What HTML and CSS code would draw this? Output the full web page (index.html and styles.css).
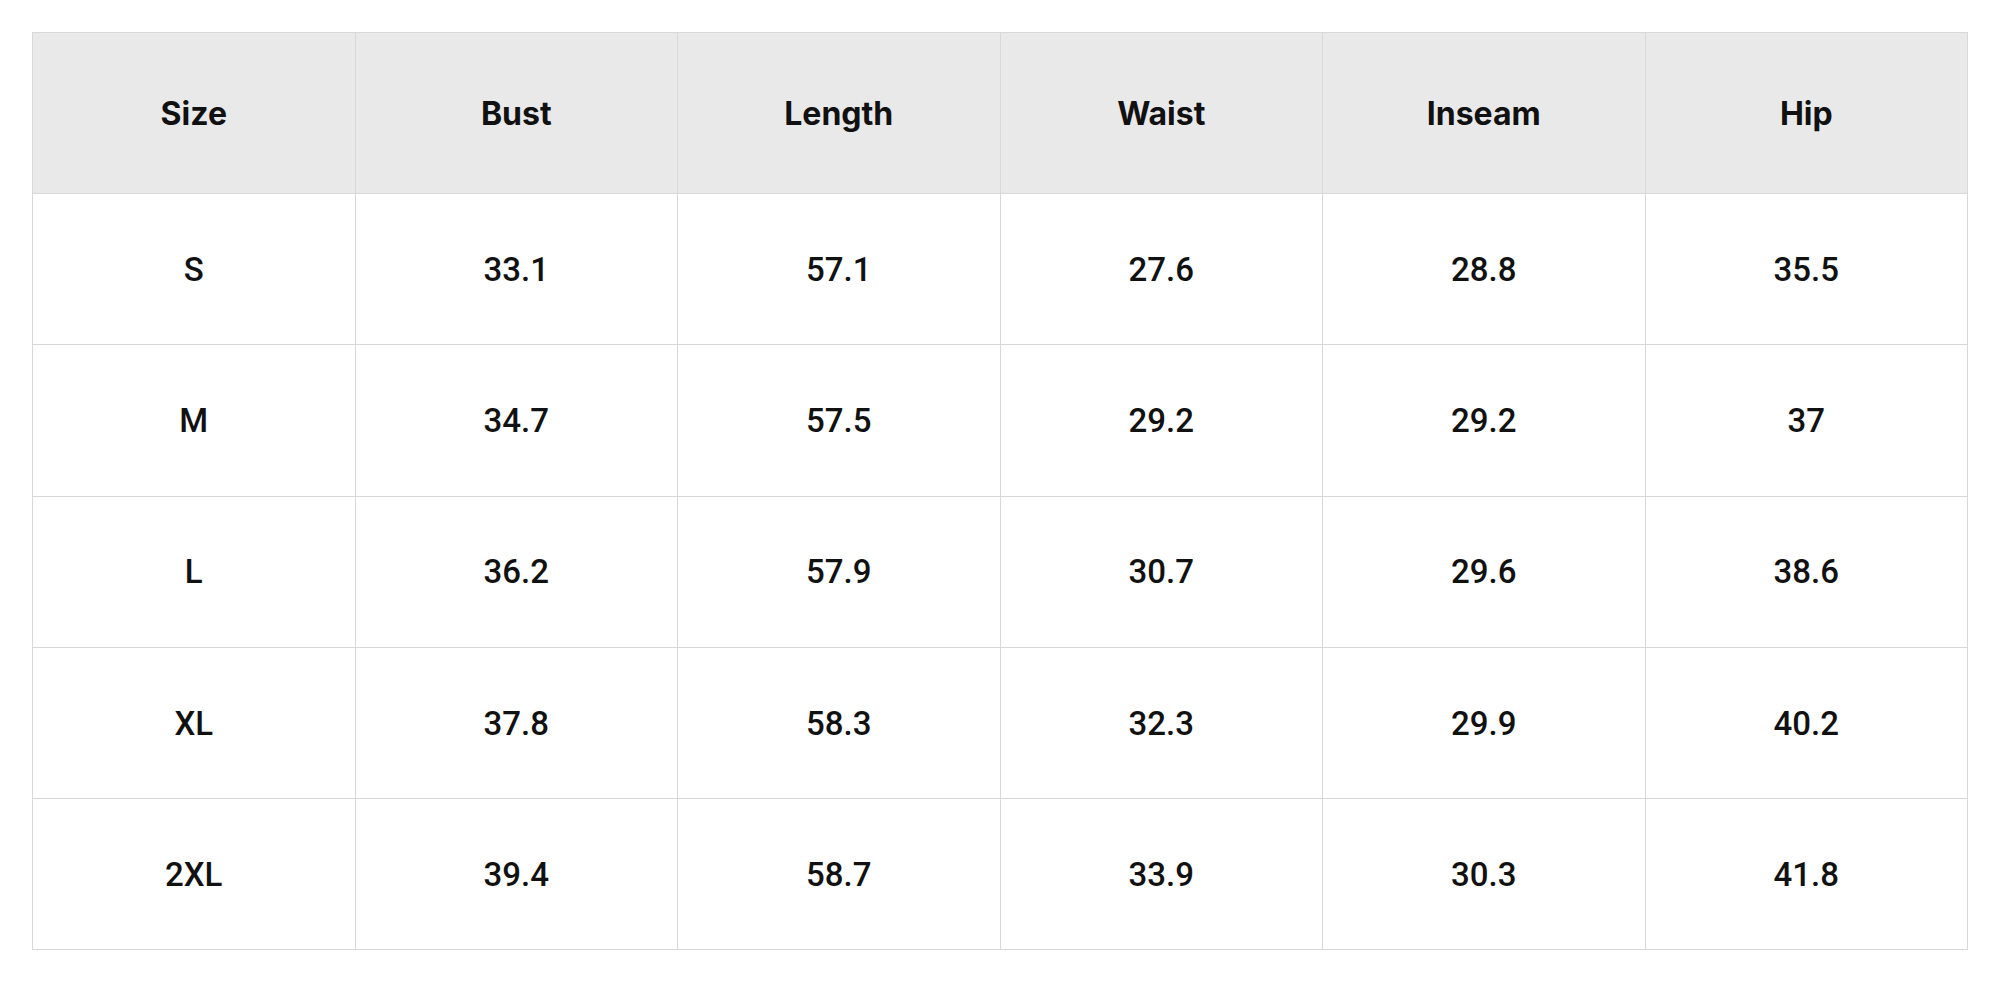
FILE: index.html
```html
<!DOCTYPE html>
<html>
<head>
<meta charset="utf-8">
<link rel="stylesheet" href="styles.css">
</head>
<body>
<table class="size-table">
  <thead>
    <tr><th>Size</th><th>Bust</th><th>Length</th><th>Waist</th><th>Inseam</th><th>Hip</th></tr>
  </thead>
  <tbody>
    <tr><td>S</td><td>33.1</td><td>57.1</td><td>27.6</td><td>28.8</td><td>35.5</td></tr>
    <tr><td>M</td><td>34.7</td><td>57.5</td><td>29.2</td><td>29.2</td><td>37</td></tr>
    <tr><td>L</td><td>36.2</td><td>57.9</td><td>30.7</td><td>29.6</td><td>38.6</td></tr>
    <tr><td>XL</td><td>37.8</td><td>58.3</td><td>32.3</td><td>29.9</td><td>40.2</td></tr>
    <tr><td>2XL</td><td>39.4</td><td>58.7</td><td>33.9</td><td>30.3</td><td>41.8</td></tr>
  </tbody>
</table>
</body>
</html>
```
FILE: styles.css
```css
html, body {
  margin: 0;
  padding: 0;
  background: #ffffff;
}
body {
  padding: 32px;
  font-family: Inter, "Liberation Sans", sans-serif;
  color: #111111;
}
.size-table {
  width: 1936px;
  border-collapse: collapse;
  table-layout: fixed;
}
.size-table th,
.size-table td {
  border: 1px solid #d8d8d8;
  text-align: center;
  vertical-align: middle;
  font-size: 32px;
  padding: 0;
}
.size-table th {
  height: 160px;
  background: #e9e9e9;
  font-weight: 700;
}
.size-table td {
  height: 150.3px;
  font-family: Roboto, Inter, sans-serif;
  font-weight: 500;
  font-size: 33px;
}
```
